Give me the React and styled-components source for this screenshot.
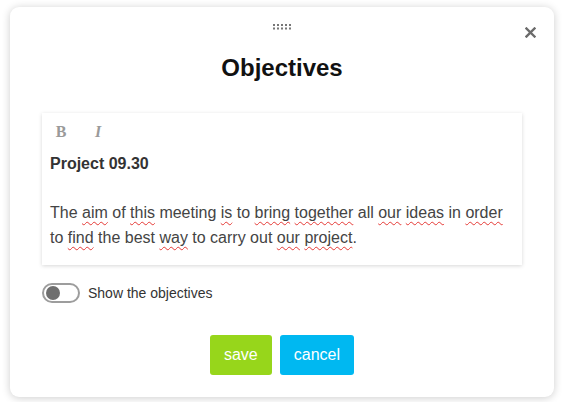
import React from "react";
import styled, { createGlobalStyle } from "styled-components";

const GlobalStyle = createGlobalStyle`
  html, body {
    margin: 0;
    padding: 0;
    background: #ffffff;
    font-family: "Liberation Sans", Arial, sans-serif;
  }
`;

function App() {
  return (
    <>
      <GlobalStyle />
      <Page>
        <Modal>
          <CloseButton aria-label="close">
            <svg width="11" height="11" viewBox="0 0 11 11">
              <path d="M1.5 1.5 L9.5 9.5 M9.5 1.5 L1.5 9.5" stroke="#6b6b6b" strokeWidth="2.4" strokeLinecap="square" />
            </svg>
          </CloseButton>
          <DragHandle>
            <svg width="19" height="6" viewBox="0 0 19 6">
              {[0, 1, 2, 3, 4].map((c) =>
                [0, 1].map((r) => (
                  <rect key={`${c}-${r}`} x={c * 4} y={r * 3.5} width="2" height="2" fill="#777" />
                ))
              )}
            </svg>
          </DragHandle>
          <Title>Objectives</Title>
          <Editor>
            <Toolbar>
              <ToolButton $italic={false}>B</ToolButton>
              <ToolButton $italic>I</ToolButton>
            </Toolbar>
            <Heading>Project 09.30</Heading>
            <Paragraph>
              The <Typo>aim</Typo> of <Typo>this</Typo> meeting <Typo>is</Typo> to{" "}
              <Typo>bring</Typo> <Typo>together</Typo> all <Typo>our</Typo>{" "}
              <Typo>ideas</Typo> in <Typo>order</Typo> to <Typo>find</Typo> the best{" "}
              <Typo>way</Typo> to carry out <Typo>our</Typo> <Typo>project</Typo>.
            </Paragraph>
          </Editor>
          <ToggleRow>
            <Switch>
              <Knob />
            </Switch>
            <ToggleLabel>Show the objectives</ToggleLabel>
          </ToggleRow>
          <Actions>
            <ActionButton $color="#97d61b">save</ActionButton>
            <ActionButton $color="#00b8f1">cancel</ActionButton>
          </Actions>
        </Modal>
      </Page>
    </>
  );
}

const Page = styled.div`
  width: 564px;
  height: 402px;
  padding: 7px 10px 0;
  box-sizing: border-box;
`;

const Modal = styled.div`
  position: relative;
  width: 544px;
  height: 390px;
  box-sizing: border-box;
  background: #fff;
  border-radius: 9px;
  box-shadow: 0 1px 8px rgba(0, 0, 0, 0.2);
  display: flex;
  flex-direction: column;
  align-items: center;
  padding-top: 17px;
`;

const CloseButton = styled.button`
  position: absolute;
  top: 20px;
  right: 18px;
  border: none;
  background: none;
  padding: 0;
  width: 11px;
  height: 11px;
  display: flex;
  cursor: pointer;
`;

const DragHandle = styled.div`
  height: 6px;
  display: flex;
  cursor: move;
`;

const Title = styled.h2`
  margin: 24px 0 0;
  font-size: 24px;
  line-height: 28px;
  font-weight: 700;
  color: #111;
`;

const Editor = styled.div`
  margin-top: 31px;
  width: 480px;
  box-sizing: border-box;
  padding: 7px 8px 15px;
  background: #fff;
  box-shadow: 0 1px 4px rgba(0, 0, 0, 0.16);
`;

const Toolbar = styled.div`
  display: flex;
  gap: 15px;
  height: 24px;
  align-items: center;
`;

const ToolButton = styled.span`
  width: 22px;
  text-align: center;
  font-family: "Liberation Serif", "Times New Roman", serif;
  font-size: 16px;
  font-weight: 700;
  font-style: ${(p) => (p.$italic ? "italic" : "normal")};
  color: #9a9a9a;
`;

const Heading = styled.div`
  margin-top: 7px;
  font-size: 16px;
  line-height: 25px;
  font-weight: 700;
  color: #333;
`;

const Paragraph = styled.p`
  margin: 24px 0 0;
  font-size: 16px;
  line-height: 25px;
  color: #444;
`;

const Typo = styled.span`
  text-decoration: underline wavy #e53935;
  text-decoration-thickness: 1px;
  text-underline-offset: 3px;
`;

const ToggleRow = styled.div`
  align-self: flex-start;
  margin: 18px 0 0 32px;
  display: flex;
  align-items: center;
  gap: 8px;
`;

const Switch = styled.div`
  width: 38px;
  height: 20px;
  box-sizing: border-box;
  border: 2px solid #9d9d9d;
  border-radius: 10px;
  display: flex;
  align-items: center;
  padding-left: 2px;
`;

const Knob = styled.div`
  width: 14px;
  height: 14px;
  border-radius: 50%;
  background: #6e6e6e;
`;

const ToggleLabel = styled.span`
  font-size: 14px;
  color: #333;
`;

const Actions = styled.div`
  margin-top: 32px;
  display: flex;
  gap: 8px;
`;

const ActionButton = styled.button`
  height: 40px;
  padding: 0 14px;
  border: none;
  border-radius: 3px;
  background: ${(p) => p.$color};
  color: #fff;
  font-family: "Liberation Sans", Arial, sans-serif;
  font-size: 16px;
  cursor: pointer;
`;

export default App;
